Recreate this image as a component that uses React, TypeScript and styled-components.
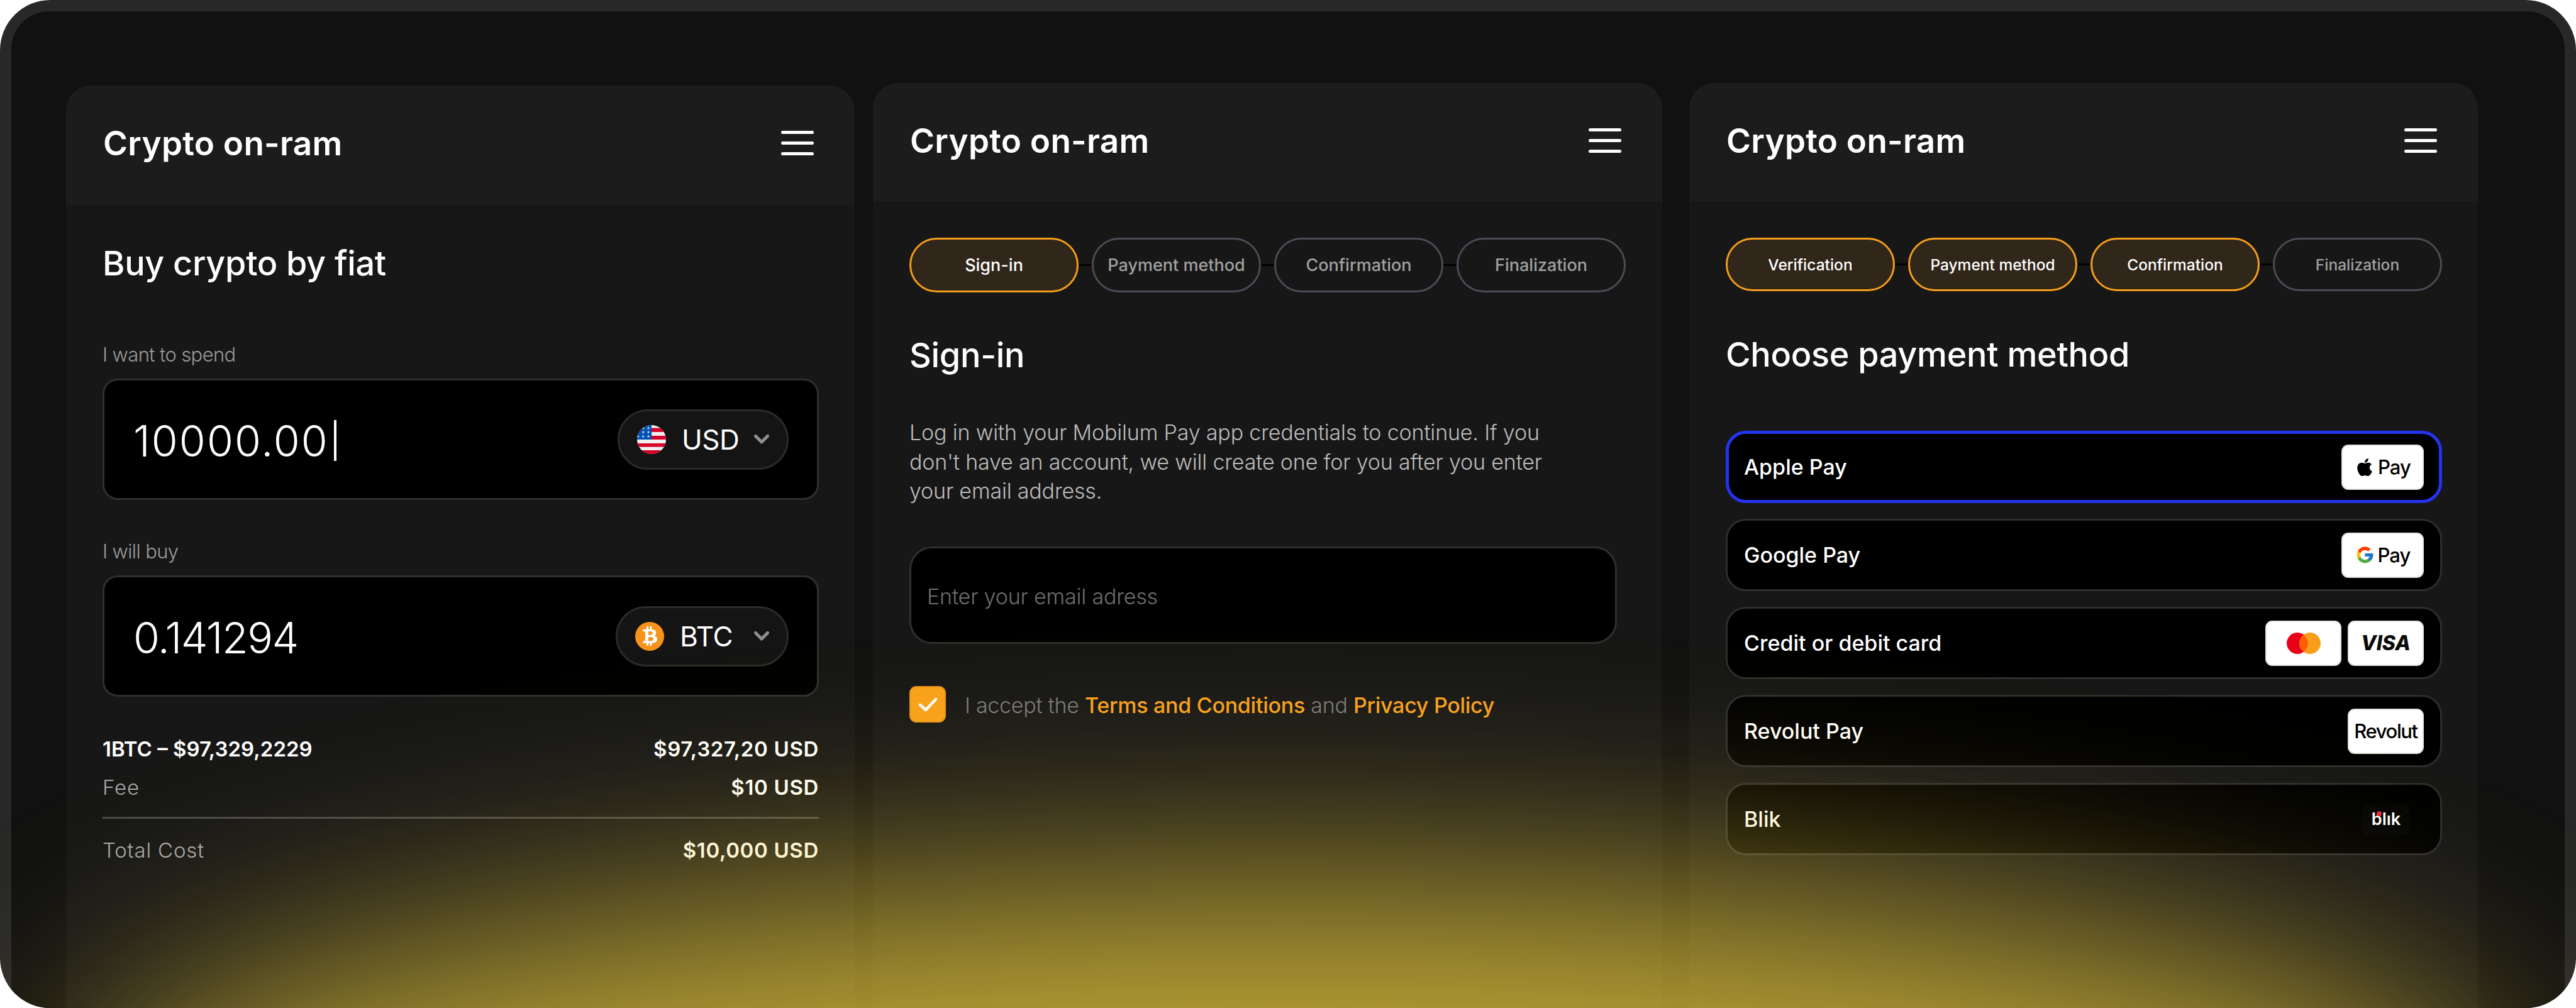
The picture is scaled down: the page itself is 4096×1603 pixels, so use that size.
import styled, { createGlobalStyle } from "styled-components";
import { FaApple, FaBtc } from "react-icons/fa";
import { FcGoogle } from "react-icons/fc";

const GlobalStyle = createGlobalStyle`
  html, body {
    margin: 0;
    background: #fff;
  }
  * {
    box-sizing: border-box;
  }
  body {
    font-family: Inter, "Liberation Sans", sans-serif;
    color: #fff;
  }
`

const Frame = styled.div`
  position: relative;
  width: 4096px;
  height: 1603px;
  padding: 18px 18px 0;
  background: #282828;
  border-radius: 80px;
  overflow: hidden;
`

const Screen = styled.div`
  display: flex;
  align-items: stretch;
  height: 100%;
  padding: 114px 0 0 87px;
  background: #111;
  border-radius: 60px 60px 0 0;
`

const Glow = styled.div`
  position: absolute;
  left: 110px;
  top: 1395px;
  width: 3876px;
  height: 800px;
  border-radius: 50%;
  background: rgba(240, 208, 62, 0.75);
  filter: blur(170px);
  pointer-events: none;
`

const Card = styled.section<{ $width: number; $gapAfter?: number; $top?: number }>`
  display: flex;
  flex-direction: column;
  width: ${(p) => p.$width}px;
  margin-right: ${(p) => p.$gapAfter ?? 0}px;
  margin-top: ${(p) => p.$top ?? 0}px;
  background: #171717;
  border-radius: 40px 40px 0 0;
  overflow: hidden;
`

const CardHeader = styled.header<{ $height: number }>`
  display: flex;
  justify-content: space-between;
  align-items: flex-start;
  height: ${(p) => p.$height}px;
  padding: 72px 65px 0 59px;
  background: #1c1c1c;
`

const CardTitle = styled.h1`
  margin: -12px 0 0;
  font-size: 53px;
  line-height: 64px;
  font-weight: 600;
  letter-spacing: 0.005em;
`

const Burger = styled.div`
  display: flex;
  flex-direction: column;
  gap: 12px;
  width: 52px;
`

const BurgerLine = styled.span`
  display: block;
  height: 5px;
  background: #fff;
  border-radius: 3px;
`

const CardBody = styled.div<{ $top: number }>`
  display: flex;
  flex-direction: column;
  padding: ${(p) => p.$top}px 57px 0 58px;
`

const Heading = styled.h2<{ $after: number }>`
  margin: 0 0 ${(p) => p.$after}px;
  font-size: 54px;
  line-height: 64px;
  font-weight: 500;
  letter-spacing: -0.006em;
`

const FieldLabel = styled.div`
  font-size: 31px;
  line-height: 40px;
  font-weight: 300;
  color: #9a9a9a;
  letter-spacing: -0.02em;
  margin-bottom: 18px;
`

const AmountBox = styled.div<{ $after: number }>`
  display: flex;
  align-items: center;
  justify-content: space-between;
  height: 193px;
  margin-bottom: ${(p) => p.$after}px;
  padding: 0 45px 0 46px;
  background: #000;
  border: 3px solid #2f2f2f;
  border-radius: 24px;
`

const AmountValue = styled.div<{ $tracking: number }>`
  display: flex;
  align-items: center;
  padding-top: 4px;
  font-size: 68px;
  line-height: 80px;
  font-weight: 350;
  letter-spacing: ${(p) => p.$tracking}em;
`

const Caret = styled.span`
  display: inline-block;
  width: 4px;
  height: 65px;
  margin-left: 8px;
  background: #fff;
`

const CurrencyPill = styled.div<{ $width: number }>`
  display: flex;
  align-items: center;
  width: ${(p) => p.$width}px;
  height: 96px;
  padding-left: 28px;
  background: #141414;
  border: 3px solid #2b2b2b;
  border-radius: 48px;
`

const CurrencyCode = styled.span`
  margin-left: 25px;
  font-size: 44px;
  font-weight: 400;
  letter-spacing: -0.01em;
`

const ChevronWrap = styled.span`
  display: flex;
  margin-left: auto;
  margin-right: 28px;
`

const CoinBadge = styled.span`
  display: flex;
  align-items: center;
  justify-content: center;
  width: 46px;
  height: 46px;
  border-radius: 50%;
  background: #f7931a;
  color: #fff;
  font-size: 31px;
`

const SummaryRow = styled.div<{ $after?: number }>`
  display: flex;
  justify-content: space-between;
  font-size: 33px;
  line-height: 40px;
  margin-bottom: ${(p) => p.$after ?? 0}px;
`

const SummaryName = styled.span<{ $strong?: boolean }>`
  font-weight: ${(p) => (p.$strong ? 600 : 300)};
  color: ${(p) => (p.$strong ? "#fff" : "#a8a8a8")};
  letter-spacing: ${(p) => (p.$strong ? 0 : 0.025)}em;
`

const SummaryValue = styled.span`
  font-weight: 600;
  letter-spacing: 0.02em;
`

const Divider = styled.div`
  height: 3px;
  margin: 27px 0 30px;
  background: rgba(255, 255, 255, 0.22);
`

const Steps = styled.div<{ $after: number }>`
  display: flex;
  align-items: center;
  margin-bottom: ${(p) => p.$after}px;
`

const Step = styled.div<{ $active?: boolean; $height: number; $font: number }>`
  display: flex;
  align-items: center;
  justify-content: center;
  flex: 0 0 269px;
  height: ${(p) => p.$height}px;
  font-size: ${(p) => p.$font}px;
  font-weight: 500;
  border-radius: 44px;
  border: 3px solid ${(p) => (p.$active ? "#f59e1b" : "#4a4c57")};
  background: ${(p) => (p.$active ? "#30261a" : "transparent")};
  color: ${(p) => (p.$active ? "#fff" : "#a0a0a0")};
`

const StepLink = styled.span`
  flex: 0 0 21px;
  height: 3px;
  background: #000;
`

const Paragraph = styled.p`
  margin: 0 0 64px;
  font-size: 34px;
  line-height: 46.5px;
  font-weight: 300;
  color: #bcbcbc;
  letter-spacing: -0.005em;
`

const EmailInput = styled.div`
  display: flex;
  align-items: center;
  width: 1125px;
  height: 155px;
  margin-bottom: 67px;
  padding: 4px 0 0 25px;
  background: #000;
  border: 3px solid #2f2f2f;
  border-radius: 36px;
  font-size: 34px;
  font-weight: 300;
  color: #6e6e6e;
  letter-spacing: -0.005em;
`

const ConsentRow = styled.div`
  display: flex;
  align-items: center;
  gap: 30px;
  font-size: 34px;
  font-weight: 300;
  color: #7a7a7a;
  letter-spacing: -0.008em;
`

const ConsentText = styled.span`
  padding-top: 3px;
`

const CheckBox = styled.span`
  display: flex;
  flex: 0 0 58px;
  height: 58px;
  background: #f9a11b;
  border: 2px solid #e6951a;
  border-radius: 11px;
`

const ConsentLink = styled.span`
  color: #f9a11b;
  font-weight: 500;
`

const MethodList = styled.div`
  display: flex;
  flex-direction: column;
  gap: 25px;
`

const MethodRow = styled.div<{ $selected?: boolean }>`
  display: flex;
  align-items: center;
  justify-content: space-between;
  height: 115px;
  padding: 0 ${(p) => (p.$selected ? 24 : 26)}px;
  background: #000;
  border: ${(p) => (p.$selected ? "5px solid #2433ec" : "3px solid #2d2d2d")};
  border-radius: 32px;
`

const MethodName = styled.span`
  font-size: 34px;
  font-weight: 500;
`

const MethodBadges = styled.div`
  display: flex;
  gap: 10px;
`

const PayBadge = styled.div<{ $wide?: boolean }>`
  display: flex;
  align-items: center;
  justify-content: center;
  gap: 5px;
  width: ${(p) => (p.$wide ? 131 : 121)}px;
  height: 72px;
  background: #fff;
  border: 2px solid #e4e4e4;
  border-radius: 11px;
  color: #000;
  font-size: 31px;
  font-weight: 500;
  letter-spacing: -0.03em;
`

const VisaMark = styled.span`
  font-size: 32px;
  font-weight: 800;
  font-style: italic;
  letter-spacing: 0;
  color: #0b0b0b;
`

const RevolutMark = styled.span`
  font-size: 31px;
  font-weight: 500;
  letter-spacing: -0.045em;
`

const BlikBadge = styled.div`
  position: relative;
  display: flex;
  align-items: center;
  justify-content: center;
  width: 74px;
  height: 50px;
  margin-right: 23px;
  background: #050505;
  font-size: 27px;
  font-weight: 600;
`

const BlikDot = styled.span`
  position: absolute;
  top: 12px;
  left: 22px;
  width: 8px;
  height: 8px;
  border-radius: 50%;
  background: #e8283c;
`

const Chevron = () => (
  <svg width="24" height="15" viewBox="0 0 24 15" fill="none">
    <path d="M2.5 2.5 L12 12 L21.5 2.5" stroke="#8f8f8f" strokeWidth="5" strokeLinecap="round" strokeLinejoin="round" />
  </svg>
)

const starSpots = [
  [9.7, 4.7], [18, 4.7],
  [1.3, 11.3], [9.7, 11.3], [18, 11.3],
  [1.3, 18], [9.7, 18], [18, 18],
]

const UsFlag = () => (
  <svg width="46" height="46" viewBox="0 0 46 46">
    <clipPath id="flag-clip">
      <circle cx="23" cy="23" r="23" />
    </clipPath>
    <g clipPath="url(#flag-clip)">
      <rect width="46" height="46" fill="#f0f0f0" />
      <rect y="4.7" width="46" height="6.3" fill="#d80027" />
      <rect y="17" width="46" height="6" fill="#d80027" />
      <rect y="29" width="46" height="5.7" fill="#d80027" />
      <rect y="40" width="46" height="6" fill="#d80027" />
      <rect width="23" height="23" fill="#0052b4" />
      {starSpots.map(([x, y]) => (
        <path
          key={`${x}-${y}`}
          transform={`translate(${x} ${y})`}
          d="M0-2.6 .7-.8 2.5-.8 1-.3 1.6 2.1 0 .7-1.6 2.1-1-.3-2.5-.8-.7-.8Z"
          fill="#f0f0f0"
        />
      ))}
    </g>
  </svg>
)

const CheckMark = () => (
  <svg width="54" height="54" viewBox="0 0 54 54" fill="none">
    <path d="M15 28 L24 36 L40 19" stroke="#fff" strokeWidth="4.5" strokeLinecap="round" strokeLinejoin="round" />
  </svg>
)

const MastercardMark = () => (
  <svg width="54" height="34" viewBox="0 0 54 34">
    <circle cx="17" cy="17" r="17" fill="#eb001b" />
    <circle cx="37" cy="17" r="17" fill="#f79e1b" />
    <path d="M27 3.4a17 17 0 0 1 0 27.2a17 17 0 0 1 0-27.2Z" fill="#ff5f00" />
  </svg>
)

const CardTop = ({ height }: { height: number }) => (
  <CardHeader $height={height}>
    <CardTitle>Crypto on-ram</CardTitle>
    <Burger>
      <BurgerLine />
      <BurgerLine />
      <BurgerLine />
    </Burger>
  </CardHeader>
)

const signInSteps = [
  { label: "Sign-in", active: true },
  { label: "Payment method" },
  { label: "Confirmation" },
  { label: "Finalization" },
]

const paymentSteps = [
  { label: "Verification", active: true },
  { label: "Payment method", active: true },
  { label: "Confirmation", active: true },
  { label: "Finalization" },
]

interface StepperProps {
  items: { label: string; active?: boolean }[];
  height: number;
  font: number;
  after: number;
}

const Stepper = ({ items, height, font, after }: StepperProps) => (
  <Steps $after={after}>
    {items.flatMap((item, i) => {
      const step = (
        <Step key={item.label} $active={item.active} $height={height} $font={font}>
          {item.label}
        </Step>
      )
      return i > 0 ? [<StepLink key={`link-${item.label}`} />, step] : [step]
    })}
  </Steps>
)

export default function App() {
  return (
    <Frame>
      <GlobalStyle />
      <Screen>
        <Card $width={1254} $gapAfter={29} $top={4}>
          <CardTop height={190} />
          <CardBody $top={61}>
            <Heading $after={93}>Buy crypto by fiat</Heading>
            <FieldLabel>I want to spend</FieldLabel>
            <AmountBox $after={62}>
              <AmountValue $tracking={0.03}>
                10000.00
                <Caret />
              </AmountValue>
              <CurrencyPill $width={272}>
                <UsFlag />
                <CurrencyCode>USD</CurrencyCode>
                <ChevronWrap>
                  <Chevron />
                </ChevronWrap>
              </CurrencyPill>
            </AmountBox>
            <FieldLabel>I will buy</FieldLabel>
            <AmountBox $after={63}>
              <AmountValue $tracking={-0.023}>0.141294</AmountValue>
              <CurrencyPill $width={275}>
                <CoinBadge>
                  <FaBtc />
                </CoinBadge>
                <CurrencyCode>BTC</CurrencyCode>
                <ChevronWrap>
                  <Chevron />
                </ChevronWrap>
              </CurrencyPill>
            </AmountBox>
            <SummaryRow $after={21}>
              <SummaryName $strong>1BTC – $97,329,2229</SummaryName>
              <SummaryValue>$97,327,20 USD</SummaryValue>
            </SummaryRow>
            <SummaryRow>
              <SummaryName>Fee</SummaryName>
              <SummaryValue>$10 USD</SummaryValue>
            </SummaryRow>
            <Divider />
            <SummaryRow>
              <SummaryName>Total Cost</SummaryName>
              <SummaryValue>$10,000 USD</SummaryValue>
            </SummaryRow>
          </CardBody>
        </Card>

        <Card $width={1255} $gapAfter={43}>
          <CardTop height={188} />
          <CardBody $top={58}>
            <Stepper items={signInSteps} height={87} font={27} after={68} />
            <Heading $after={68}>Sign-in</Heading>
            <Paragraph>
              Log in with your Mobilum Pay app credentials to continue. If you
              <br />
              don't have an account, we will create one for you after you enter
              <br />
              your email address.
            </Paragraph>
            <EmailInput>Enter your email adress</EmailInput>
            <ConsentRow>
              <CheckBox>
                <CheckMark />
              </CheckBox>
              <ConsentText>
                I accept the <ConsentLink>Terms and Conditions</ConsentLink> and{" "}
                <ConsentLink>Privacy Policy</ConsentLink>
              </ConsentText>
            </ConsentRow>
          </CardBody>
        </Card>

        <Card $width={1254}>
          <CardTop height={188} />
          <CardBody $top={58}>
            <Stepper items={paymentSteps} height={85} font={24.5} after={69} />
            <Heading $after={89}>Choose payment method</Heading>
            <MethodList>
              <MethodRow $selected>
                <MethodName>Apple Pay</MethodName>
                <PayBadge $wide>
                  <FaApple size={32} />
                  Pay
                </PayBadge>
              </MethodRow>
              <MethodRow>
                <MethodName>Google Pay</MethodName>
                <PayBadge $wide>
                  <FcGoogle size={31} />
                  Pay
                </PayBadge>
              </MethodRow>
              <MethodRow>
                <MethodName>Credit or debit card</MethodName>
                <MethodBadges>
                  <PayBadge>
                    <MastercardMark />
                  </PayBadge>
                  <PayBadge>
                    <VisaMark>VISA</VisaMark>
                  </PayBadge>
                </MethodBadges>
              </MethodRow>
              <MethodRow>
                <MethodName>Revolut Pay</MethodName>
                <PayBadge>
                  <RevolutMark>Revolut</RevolutMark>
                </PayBadge>
              </MethodRow>
              <MethodRow>
                <MethodName>Blik</MethodName>
                <BlikBadge>
                  blık
                  <BlikDot />
                </BlikBadge>
              </MethodRow>
            </MethodList>
          </CardBody>
        </Card>
      </Screen>
      <Glow />
    </Frame>
  )
}
